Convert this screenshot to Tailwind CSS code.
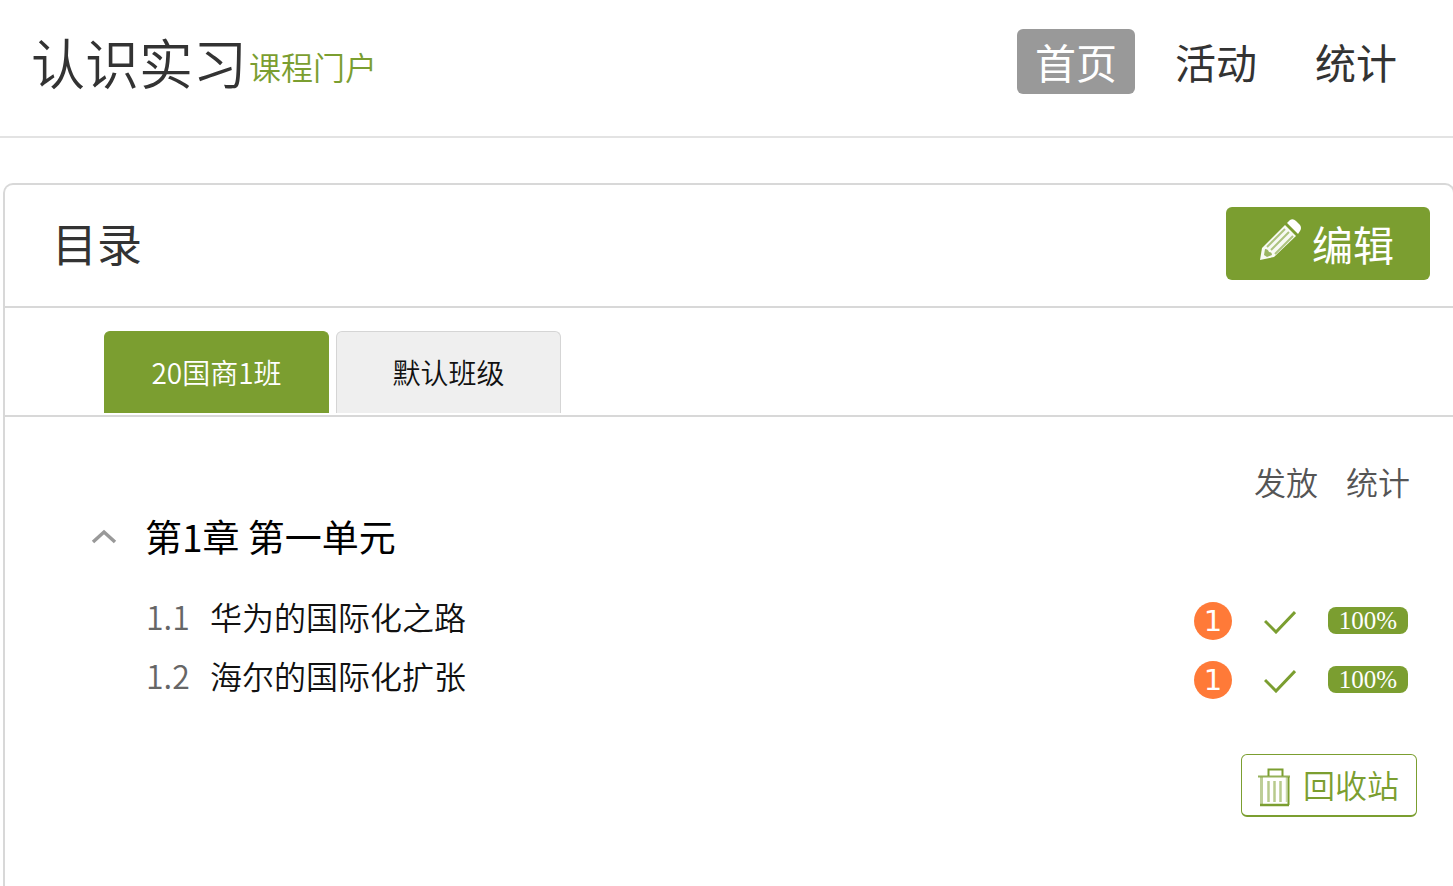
<!DOCTYPE html>
<html lang="zh-CN">
<head>
<meta charset="utf-8">
<meta name="viewport" content="width=device-width, initial-scale=1">
<title>认识实习 课程门户</title>
<script src="https://cdn.jsdelivr.net/npm/@tailwindcss/browser@4"></script>
</head>
<body class="flex min-h-screen flex-col overflow-x-hidden bg-white font-['Noto_Sans_CJK_SC',sans-serif] font-normal text-[#333]">
<header class="flex h-[138px] items-start justify-between border-b-2 border-[#e3e3e3] pr-[38px] pl-[31px]">
  <h1 class="flex items-center gap-0.5 pt-[22px] text-[54px] leading-[80px] font-[350]">认识实习<span class="pt-2 text-[32px] leading-[72px] text-[#7b9e30]">课程门户</span></h1>
  <nav class="flex gap-[22px] pt-[29px] text-[41px] leading-[65px]">
    <a href="#" class="rounded-md bg-[#999] px-[18px] text-white" aria-current="page">首页</a>
    <a href="#" class="px-[18px]">活动</a>
    <a href="#" class="px-[18px]">统计</a>
  </nav>
</header>
<main class="mt-[45px] -mr-0.5 ml-[3px] grow rounded-t-[10px] border-2 border-b-0 border-[#d8d8d8]">
  <div class="flex items-center justify-between border-b-2 border-[#d8d8d8] pt-[22px] pr-[23px] pb-[26px] pl-[47px]">
    <h2 class="pb-0.5 text-[45px] leading-[71px]">目录</h2>
    <button type="button" class="flex items-center gap-2.5 rounded-md bg-[#7b9e30] pr-9 pl-[33px] text-[41px] leading-[73px] text-white">
      <svg class="-mt-2 h-[42px] w-[43px]" viewBox="0 0 43 42" aria-hidden="true">
        <path d="M1 41 3 29 26 6 37 17 15 38Z" fill="#fff" fill-opacity=".95"/>
        <path d="M28 4 31 1Q34-1 37 2L41 6Q43 9 41 12L39 15Z" fill="#fff"/>
        <path d="M8 28 26 10M12 31 30 13M16 35 34 17" fill="none" stroke="#7b9e30" stroke-opacity=".6" stroke-width="2"/>
        <path d="M6 30 5 36 8 38 13 36Q13 33 10 33 9 30 6 30Z" fill="#7b9e30" fill-opacity=".75"/>
        <path d="M27 4.500 38.500 16" fill="none" stroke="#7b9e30" stroke-opacity=".8" stroke-width="1.500"/>
      </svg>
      编辑
    </button>
  </div>
  <div class="flex gap-[7px] border-b-2 border-[#d8d8d8] pt-[23px] pb-0.5 pl-[99px] text-[28px] leading-[81px] font-[350]">
    <button type="button" class="w-[225px] rounded-t-md border border-b-0 border-[#7b9e30] bg-[#7b9e30] text-white">20国商1班</button>
    <button type="button" class="w-[225px] rounded-t-md border border-b-0 border-[#d5d5d5] bg-[#efefef] text-[#111]">默认班级</button>
  </div>
  <section class="pt-[38px] pb-8 pl-[85px] text-[32px] leading-[52px]">
    <div class="flex justify-end gap-7 pr-[43px] font-[350] text-[#555]"><span>发放</span><span>统计</span></div>
    <h3 class="text-[37px] leading-[58px] text-black">
      <button type="button" class="flex items-center gap-[27px]" aria-expanded="true">
        <svg class="h-4 w-7" viewBox="0 0 28 16" fill="none" stroke="#999" stroke-width="3.5" aria-hidden="true"><path d="M3 14 14 4 25 14"/></svg>
        <span>第1章 第一单元</span>
      </button>
    </h3>
    <ul class="mt-[26px] pr-[45px] pl-14 leading-[51px]">
      <li class="flex items-center font-[350]">
        <span class="w-16 pb-2 text-[#666]">1.1</span>
        <a href="#" class="grow pb-2 text-[#111]">华为的国际化之路</a>
        <span class="h-[38px] w-[38px] rounded-full bg-[#ff7a38] text-center font-['DejaVu_Sans',sans-serif] text-[29px] leading-[38px] font-normal text-white">1</span>
        <svg class="mt-0.5 ml-8 h-6 w-8" viewBox="0 0 32 24" fill="none" stroke="#7b9e30" stroke-width="3" role="img" aria-label="已发放"><path d="M1 11 12 22 31 2"/></svg>
        <span class="ml-8 w-20 rounded-lg bg-[#7b9e30] text-center font-['Liberation_Serif',serif] text-[25px] leading-[27px] text-white">100%</span>
      </li>
      <li class="flex items-center font-[350]">
        <span class="w-16 pb-2 text-[#666]">1.2</span>
        <a href="#" class="grow pb-2 text-[#111]">海尔的国际化扩张</a>
        <span class="h-[38px] w-[38px] rounded-full bg-[#ff7a38] text-center font-['DejaVu_Sans',sans-serif] text-[29px] leading-[38px] font-normal text-white">1</span>
        <svg class="mt-0.5 ml-8 h-6 w-8" viewBox="0 0 32 24" fill="none" stroke="#7b9e30" stroke-width="3" role="img" aria-label="已发放"><path d="M1 11 12 22 31 2"/></svg>
        <span class="ml-8 w-20 rounded-lg bg-[#7b9e30] text-center font-['Liberation_Serif',serif] text-[25px] leading-[27px] text-white">100%</span>
      </li>
    </ul>
    <div class="mt-[45px] flex justify-end pr-9">
      <button type="button" class="flex items-center gap-[13px] rounded-md border border-b-2 border-[#7b9e30] pr-[17px] pl-4 leading-[58px] font-[350] text-[#7b9e30]">
        <svg class="mt-1 h-[39px] w-8" viewBox="0 0 32 39" fill="none" stroke="#7b9e30" aria-hidden="true">
          <path d="M10.500 8V1.500H24.500V8" stroke-width="2"/>
          <path d="M0 8.500H32" stroke-width="2" stroke-opacity=".8"/>
          <path d="M3.500 9V37" stroke-width="3" stroke-opacity=".5"/>
          <path d="M30.500 9V37" stroke-width="2"/>
          <path d="M2 37H31" stroke-width="2.500"/>
          <path d="M10.500 13V34M16.500 13V34M22.500 13V34" stroke-width="2.500" stroke-opacity=".55"/>
          <path d="M28.500 9V34" stroke-width="1.500" stroke-opacity=".4"/>
        </svg>
        <span class="pb-0.5">回收站</span>
      </button>
    </div>
  </section>
</main>
</body>
</html>
